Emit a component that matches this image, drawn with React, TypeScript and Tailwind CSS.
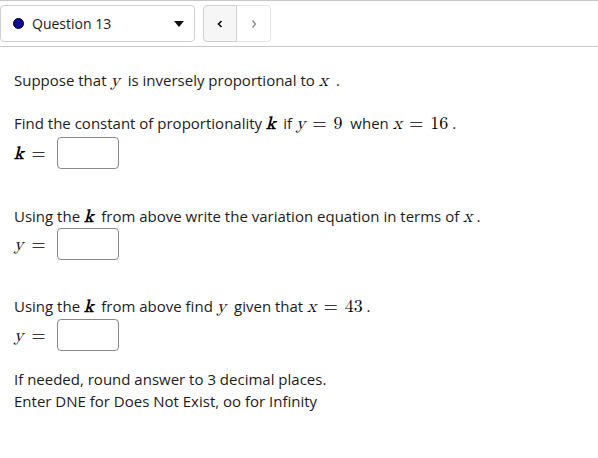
import React from "react";

const M = ({ children, b }: { children: React.ReactNode; b?: boolean }) => (
  <span
    className={`italic ${b ? "font-bold" : "font-normal"} text-[18px] text-black font-['Latin_Modern_Math','Liberation_Serif',serif]`}
  >
    {children}
  </span>
);
const N = ({ children }: { children: React.ReactNode }) => (
  <span className="text-[18px] text-black font-['Latin_Modern_Math','Liberation_Serif',serif]">
    {children}
  </span>
);
const Eq = ({ wide }: { wide?: boolean }) => (
  <span
    className={`${wide ? "mx-[7px]" : "ml-[8px]"} text-[18px] text-black font-['Latin_Modern_Math','Liberation_Serif',serif]`}
  >
    =
  </span>
);

const Box = () => (
  <div className="w-[62px] h-[32px] border border-[#8a8a8a] rounded-[4px] bg-white" />
);

const Lhs = ({ children, b }: { children: React.ReactNode; b?: boolean }) => (
  <div className="w-[43px] flex items-center">
    <M b={b}>{children}</M>
    <Eq />
  </div>
);

export default function App() {
  return (
    <div className="w-[598px] h-[458px] bg-white text-[15px] text-[#1c1c1c] font-['Open_Sans','Noto_Sans',sans-serif]">
      <div className="border-t border-b border-[#c8c8c8] w-[598px] h-[47px] pt-[4px] flex items-start">
        <div className="w-[195px] h-[37px] border border-[#cfcfcf] rounded-[4px] flex items-center pl-[12px] pr-[8px]">
          <span className="w-[11px] h-[11px] rounded-full bg-[#0b0b9b] border border-black" />
          <span className="ml-[8px] text-[14px] text-[#1c1c1c]">Question 13</span>
          <span className="ml-auto mr-[2px]">
            <svg width="10" height="6" viewBox="0 0 10 6">
              <path d="M0 0 L10 0 L5 6 Z" fill="#111" />
            </svg>
          </span>
        </div>
        <div className="ml-[8px] flex h-[37px]">
          <div className="w-[34px] h-[37px] border border-[#d0d0d0] rounded-l-[4px] bg-[#f6f6f6] flex items-center justify-center">
            <svg width="8" height="10" viewBox="0 0 8 10">
              <path d="M5.5 2 L2.5 5 L5.5 8" fill="none" stroke="#111" strokeWidth="1.7" />
            </svg>
          </div>
          <div className="w-[34px] h-[37px] border border-l-0 border-[#e4e4e4] rounded-r-[4px] bg-white flex items-center justify-center">
            <svg width="8" height="10" viewBox="0 0 8 10">
              <path d="M2.5 1.5 L5.5 5 L2.5 8.5" fill="none" stroke="#8a8a8a" strokeWidth="1.3" />
            </svg>
          </div>
        </div>
      </div>

      <div className="pl-[14px]">
        <div className="mt-[23px] h-[20px] leading-[20px] whitespace-nowrap">
          Suppose that <M>y</M> &nbsp;is inversely proportional to <M>x</M> &nbsp;.
        </div>
        <div className="mt-[23px] h-[20px] leading-[20px] whitespace-nowrap">
          Find the constant of proportionality <M b>k</M> &nbsp;if <M>y</M>
          <Eq wide />
          <N>9</N> &nbsp;when <M>x</M>
          <Eq wide />
          <N>16</N> .
        </div>
        <div className="mt-[4px] flex items-center h-[32px]">
          <Lhs b>k</Lhs>
          <Box />
        </div>

        <div className="mt-[37px] h-[20px] leading-[20px] whitespace-nowrap">
          Using the <M b>k</M> &nbsp;from above write the variation equation in terms of <M>x</M> .
        </div>
        <div className="mt-[2px] flex items-center h-[32px]">
          <Lhs>y</Lhs>
          <Box />
        </div>

        <div className="mt-[36px] h-[20px] leading-[20px] whitespace-nowrap">
          Using the <M b>k</M> &nbsp;from above find <M>y</M> &nbsp;given that <M>x</M>
          <Eq wide />
          <N>43</N> .
        </div>
        <div className="mt-[3px] flex items-center h-[32px]">
          <Lhs>y</Lhs>
          <Box />
        </div>

        <div className="mt-[17px] leading-[22px]">
          <div>If needed, round answer to 3 decimal places.</div>
          <div>Enter DNE for Does Not Exist, oo for Infinity</div>
        </div>
      </div>
    </div>
  );
}
